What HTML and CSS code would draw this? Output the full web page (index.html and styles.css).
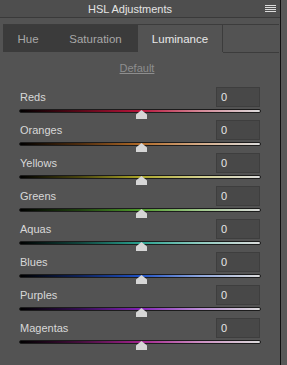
FILE: index.html
```html
<!DOCTYPE html>
<html lang="en">
<head>
    <meta charset="UTF-8">
    <title>HSL Adjustments</title>
    <link rel="stylesheet" href="styles.css">
</head>
<body>

    <div class="panel">
        <div class="header">
            <span class="title">HSL Adjustments</span>
            <svg class="menu" width="11" height="7" viewBox="0 0 11 7">
                <rect x="0" y="0" width="11" height="1" fill="#dcdcdc"/>
                <rect x="0" y="2" width="11" height="1" fill="#dcdcdc"/>
                <rect x="0" y="4" width="11" height="1" fill="#dcdcdc"/>
                <rect x="0" y="6" width="11" height="1" fill="#dcdcdc"/>
            </svg>
        </div>

        <div class="tabs">
            <div class="tab tab-hue">Hue</div>
            <div class="tab tab-sat">Saturation</div>
            <div class="tab tab-lum active">Luminance</div>
            <div class="tab-rest"></div>
        </div>

        <div class="default"><span>Default</span></div>

        <!-- Colour rows -->
        <div class="rows">
            <div class="row reds">
                <div class="row-top"><span class="label">Reds</span><input class="value" type="text" value="0"></div>
                <div class="slider"><div class="track"></div><div class="thumb"></div></div>
            </div>
            <div class="row oranges">
                <div class="row-top"><span class="label">Oranges</span><input class="value" type="text" value="0"></div>
                <div class="slider"><div class="track"></div><div class="thumb"></div></div>
            </div>
            <div class="row yellows">
                <div class="row-top"><span class="label">Yellows</span><input class="value" type="text" value="0"></div>
                <div class="slider"><div class="track"></div><div class="thumb"></div></div>
            </div>
            <div class="row greens">
                <div class="row-top"><span class="label">Greens</span><input class="value" type="text" value="0"></div>
                <div class="slider"><div class="track"></div><div class="thumb"></div></div>
            </div>
            <div class="row aquas">
                <div class="row-top"><span class="label">Aquas</span><input class="value" type="text" value="0"></div>
                <div class="slider"><div class="track"></div><div class="thumb"></div></div>
            </div>
            <div class="row blues">
                <div class="row-top"><span class="label">Blues</span><input class="value" type="text" value="0"></div>
                <div class="slider"><div class="track"></div><div class="thumb"></div></div>
            </div>
            <div class="row purples">
                <div class="row-top"><span class="label">Purples</span><input class="value" type="text" value="0"></div>
                <div class="slider"><div class="track"></div><div class="thumb"></div></div>
            </div>
            <div class="row magentas">
                <div class="row-top"><span class="label">Magentas</span><input class="value" type="text" value="0"></div>
                <div class="slider"><div class="track"></div><div class="thumb"></div></div>
            </div>
        </div>
    </div>

</body>
</html>
```

FILE: styles.css
```css
body {
    margin: 0;
    padding: 0;
    background-color: #595959;
    font-family: "Liberation Sans", Arial, sans-serif;
    font-size: 11px;
    color: #d6d6d6;
    height: 365px;
    overflow: hidden;
}
.panel {
    width: 280px;
    height: 365px;
    background-color: #535353;
    border-right: 1px solid #101010;
}
.header {
    height: 17px;
    background-color: #4e4e4e;
    border-bottom: 1px solid #3a3a3a;
    display: flex;
    align-items: center;
    justify-content: center;
    position: relative;
}
.title {
    margin-right: 20px;
    font-size: 11px;
    color: #e4e4e4;
}
.menu {
    position: absolute;
    right: 4px;
    top: 5px;
}
.tabs {
    margin: 6px 1px 0 3px;
    height: 28px;
    display: flex;
    border-top: 1px solid #3c3c3c;
}
.tab {
    display: flex;
    align-items: center;
    justify-content: center;
    height: 27px;
    font-size: 11.5px;
    color: #a8a8a8;
    background-color: #3b3b3b;
}
.tab-hue {
    width: 50px;
}
.tab-sat {
    width: 85px;
}
.tab.active {
    width: 84px;
    background-color: #535353;
    color: #e8e8e8;
    border-right: 1px solid #3c3c3c;
}
.tab-rest {
    flex: 1;
    height: 27px;
    border-bottom: 1px solid #3c3c3c;
}
.default {
    margin-top: 9px;
    height: 14px;
    text-align: center;
    padding-right: 6px;
}
.default span {
    color: #8e8e8e;
    text-decoration: underline;
    font-size: 11px;
}
.rows {
    margin-top: 11px;
    padding: 0 19px;
}
.row {
    height: 33px;
}
.row-top {
    height: 20px;
    display: flex;
    align-items: center;
    justify-content: space-between;
}
.label {
    padding-left: 1px;
    font-size: 11px;
    color: #d8d8d8;
}
.value {
    box-sizing: border-box;
    width: 44px;
    height: 20px;
    margin: 0 1px 0 0;
    padding: 0 0 0 4px;
    background-color: #484848;
    border: 1px solid #3e3e3e;
    color: #e6e6e6;
    font-family: "Liberation Sans", Arial, sans-serif;
    font-size: 11px;
    outline: none;
}
.slider {
    position: relative;
    height: 13px;
}
.track {
    margin-top: 2px;
    height: 2px;
    border: 1px solid #1c1c1c;
    border-radius: 2px;
    width: 240px;
}
.thumb {
    position: absolute;
    left: 117px;
    top: 1px;
    width: 11px;
    height: 9px;
    background-color: #d6d6d6;
    clip-path: polygon(50% 0, 100% 50%, 100% 100%, 0 100%, 0 50%);
}
.reds .track {
    background: linear-gradient(to right, #000 0%, #5a0818 25%, #b8153b 50%, #d48796 75%, #dcdcdc 100%);
}
.oranges .track {
    background: linear-gradient(to right, #000 0%, #4e2c0e 25%, #b06a28 50%, #d4ab88 75%, #dcdcdc 100%);
}
.yellows .track {
    background: linear-gradient(to right, #000 0%, #4a460e 25%, #aca62a 50%, #d2cf8e 75%, #dcdcdc 100%);
}
.greens .track {
    background: linear-gradient(to right, #000 0%, #204210 25%, #4f9a2c 50%, #a0c88c 75%, #dcdcdc 100%);
}
.aquas .track {
    background: linear-gradient(to right, #000 0%, #10443c 25%, #2aa290 50%, #8fcbc0 75%, #dcdcdc 100%);
}
.blues .track {
    background: linear-gradient(to right, #000 0%, #0e225a 25%, #2052c4 50%, #8ea6dc 75%, #dcdcdc 100%);
}
.purples .track {
    background: linear-gradient(to right, #000 0%, #340e52 25%, #8222b6 50%, #bb8ed6 75%, #dcdcdc 100%);
}
.magentas .track {
    background: linear-gradient(to right, #000 0%, #440e3c 25%, #a0228c 50%, #cc8ec2 75%, #dcdcdc 100%);
}
```
